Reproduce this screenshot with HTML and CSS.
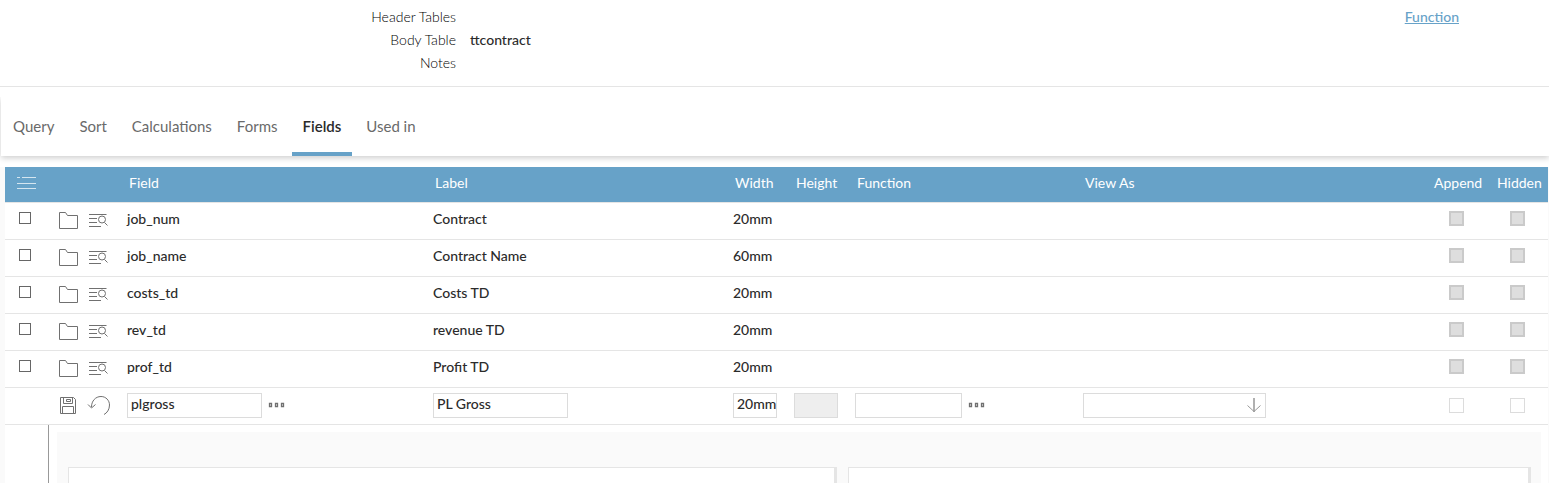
FILE: index.html
```html
<!DOCTYPE html>
<html lang="en">
<head>
<meta charset="utf-8">
<title>Fields</title>
<link rel="stylesheet" href="styles.css">
</head>
<body>
<svg class="defs" aria-hidden="true">
  <symbol id="folder" viewBox="0 0 20 20"><path d="M1.5 17.500V1.500H7.500L9.500 4.500H19.500V17.500Z"/></symbol>
  <symbol id="find" viewBox="0 0 20 20"><path d="M1 3.500H18.500M1 7.500H9M1 11.500H9M1 15.500H13M16.500 11.500L19.500 14.500"/><circle cx="14" cy="8.500" r="3.500"/></symbol>
  <symbol id="save" viewBox="0 0 20 20"><path d="M2.500 2.500H15.500L17.500 4.500V18.500H2.500ZM5.500 2.500V8.500H14.500V2.500M8.500 4.500H12.500V6.500H8.500ZM4.500 18.500V11.500H15.500V18.500"/></symbol>
  <symbol id="undo" viewBox="0 0 24 20"><path d="M4.500 12C4.500 6 8.500 1.500 14 1.500C19 1.500 22.500 5.500 22.500 10C22.500 14.500 20 18 17 19.500M1 9.500L4.500 13L8.500 9.500"/></symbol>
  <symbol id="dots" viewBox="0 0 18 6"><path d="M2.500 1.500H4.500V4.500H2.500ZM8.500 1.500H10.500V4.500H8.500ZM14.500 1.500H16.500V4.500H14.500Z" stroke-width="1.300"/></symbol>
</svg>
<header class="summary">
  <dl class="facts">
    <dt>Header Tables</dt><dd></dd>
    <dt>Body Table</dt><dd>ttcontract</dd>
    <dt>Notes</dt><dd></dd>
  </dl>
  <a class="function-link" href="#function">Function</a>
</header>
<nav class="tabs">
  <a class="tab" href="#query">Query</a>
  <a class="tab" href="#sort">Sort</a>
  <a class="tab" href="#calculations">Calculations</a>
  <a class="tab" href="#forms">Forms</a>
  <a class="tab active" href="#fields" aria-current="page">Fields</a>
  <a class="tab" href="#used">Used in</a>
</nav>
<main class="content">
  <table class="grid">
    <colgroup><col class="c-check"><col class="c-tools"><col class="c-field"><col class="c-label"><col class="c-small"><col class="c-small"><col class="c-function"><col><col class="c-append"><col class="c-hidden"></colgroup>
    <thead>
      <tr>
        <th><button class="icon-button menu" aria-label="Menu"><svg width="20" height="14"><path d="M1 1.500H4M6 1.500H20M1 7.500H20M1 12.500H20"/></svg></button></th>
        <th></th><th>Field</th><th>Label</th><th>Width</th><th>Height</th><th>Function</th><th>View As</th><th>Append</th><th>Hidden</th>
      </tr>
    </thead>
    <tbody>
      <tr>
        <td><input type="checkbox" class="pick" aria-label="Select job_num"></td>
        <td><div class="tools"><button class="icon-button" aria-label="Open"><svg width="20" height="20"><use href="#folder"/></svg></button><button class="icon-button" aria-label="Details"><svg width="20" height="20"><use href="#find"/></svg></button></div></td>
        <td>job_num</td><td>Contract</td><td>20mm</td><td></td><td></td><td></td>
        <td class="flag"><input type="checkbox" class="box" disabled aria-label="Append"></td><td class="flag last"><input type="checkbox" class="box" disabled aria-label="Hidden"></td>
      </tr>
      <tr>
        <td><input type="checkbox" class="pick" aria-label="Select job_name"></td>
        <td><div class="tools"><button class="icon-button" aria-label="Open"><svg width="20" height="20"><use href="#folder"/></svg></button><button class="icon-button" aria-label="Details"><svg width="20" height="20"><use href="#find"/></svg></button></div></td>
        <td>job_name</td><td>Contract Name</td><td>60mm</td><td></td><td></td><td></td>
        <td class="flag"><input type="checkbox" class="box" disabled aria-label="Append"></td><td class="flag last"><input type="checkbox" class="box" disabled aria-label="Hidden"></td>
      </tr>
      <tr>
        <td><input type="checkbox" class="pick" aria-label="Select costs_td"></td>
        <td><div class="tools"><button class="icon-button" aria-label="Open"><svg width="20" height="20"><use href="#folder"/></svg></button><button class="icon-button" aria-label="Details"><svg width="20" height="20"><use href="#find"/></svg></button></div></td>
        <td>costs_td</td><td>Costs TD</td><td>20mm</td><td></td><td></td><td></td>
        <td class="flag"><input type="checkbox" class="box" disabled aria-label="Append"></td><td class="flag last"><input type="checkbox" class="box" disabled aria-label="Hidden"></td>
      </tr>
      <tr>
        <td><input type="checkbox" class="pick" aria-label="Select rev_td"></td>
        <td><div class="tools"><button class="icon-button" aria-label="Open"><svg width="20" height="20"><use href="#folder"/></svg></button><button class="icon-button" aria-label="Details"><svg width="20" height="20"><use href="#find"/></svg></button></div></td>
        <td>rev_td</td><td>revenue TD</td><td>20mm</td><td></td><td></td><td></td>
        <td class="flag"><input type="checkbox" class="box" disabled aria-label="Append"></td><td class="flag last"><input type="checkbox" class="box" disabled aria-label="Hidden"></td>
      </tr>
      <tr>
        <td><input type="checkbox" class="pick" aria-label="Select prof_td"></td>
        <td><div class="tools"><button class="icon-button" aria-label="Open"><svg width="20" height="20"><use href="#folder"/></svg></button><button class="icon-button" aria-label="Details"><svg width="20" height="20"><use href="#find"/></svg></button></div></td>
        <td>prof_td</td><td>Profit TD</td><td>20mm</td><td></td><td></td><td></td>
        <td class="flag"><input type="checkbox" class="box" disabled aria-label="Append"></td><td class="flag last"><input type="checkbox" class="box" disabled aria-label="Hidden"></td>
      </tr>
      <tr class="editing">
        <td></td>
        <td><div class="tools"><button class="icon-button" aria-label="Save"><svg width="20" height="20"><use href="#save"/></svg></button><button class="icon-button" aria-label="Undo"><svg width="24" height="20"><use href="#undo"/></svg></button></div></td>
        <td><div class="lookup"><input class="text wide" type="text" value="plgross" aria-label="Field"><button class="icon-button" aria-label="Choose field"><svg width="18" height="6"><use href="#dots"/></svg></button></div></td>
        <td><div class="lookup"><input class="text wide" type="text" value="PL Gross" aria-label="Label"></div></td>
        <td><div class="lookup"><input class="text small" type="text" value="20mm" aria-label="Width"></div></td>
        <td><div class="lookup"><input class="text small" type="text" disabled aria-label="Height"></div></td>
        <td><div class="lookup"><input class="text medium" type="text" aria-label="Function"><button class="icon-button" aria-label="Choose function"><svg width="18" height="6"><use href="#dots"/></svg></button></div></td>
        <td><div class="select-wrap"><select class="text" aria-label="View As"><option></option></select><svg class="arrow" width="14" height="14"><path class="stem" d="M7 0V14"/><path d="M.5 7.500L7 13.500L13.500 7.500"/></svg></div></td>
        <td class="flag"><input type="checkbox" class="box" aria-label="Append"></td><td class="flag last"><input type="checkbox" class="box" aria-label="Hidden"></td>
      </tr>
    </tbody>
  </table>
  <section class="detail">
    <div class="panel">
      <div class="card major"></div>
      <div class="card minor"></div>
    </div>
  </section>
</main>
</body>
</html>
```
FILE: styles.css
```css
* { box-sizing: border-box; }
body {
  margin: 0;
  min-height: 100vh;
  display: flex;
  flex-direction: column;
  background: #fff;
  color: #2b2b2b;
  font: 14px/23px Lato, "Liberation Sans", sans-serif;
}
.defs { display: none; }
svg { display: block; fill: none; stroke: #707070; stroke-width: 1; }

.summary {
  display: flex;
  justify-content: space-between;
  padding: 5px 90px 12px 0;
  border-bottom: 1px solid #e5e5e5;
}
.facts {
  display: grid;
  grid-template-columns: 456px auto;
  grid-auto-rows: 23px;
  column-gap: 14px;
  margin: 0;
}
.facts dt { text-align: right; font-weight: 300; color: #000; }
.facts dd { margin: 0; font-weight: 500; }
.function-link { color: #67a2c8; font-weight: 500; }

.tabs {
  position: relative;
  display: flex;
  gap: 3px;
  margin: 10px 0 11px 1px;
  padding-left: 1px;
  background: #fff;
  box-shadow: 0 2px 6px rgba(0, 0, 0, .2);
  clip-path: inset(0 0 -11px -1px);
}
.tab {
  height: 59px;
  padding: 0 11px;
  border-bottom: 4px solid transparent;
  color: #6a6a6a;
  font-size: 15px;
  line-height: 59px;
  text-decoration: none;
}
.tab.active { border-color: #67a2c8; color: #2b2b2b; font-weight: 600; }

.content {
  flex: 1;
  display: flex;
  flex-direction: column;
  padding: 0 1px 0 5px;
  background: #fafafa;
}
.grid {
  width: 100%;
  table-layout: fixed;
  border-spacing: 0;
  background: #fff;
}
.c-check { width: 44px; }
.c-tools { width: 78px; }
.c-field { width: 306px; }
.c-label { width: 300px; }
.c-small { width: 61px; }
.c-function { width: 228px; }
.c-append { width: 63px; }
.c-hidden { width: 53px; }
th {
  height: 36px;
  padding: 0 0 4px 2px;
  border-bottom: 1px solid #e5e5e5;
  background: #67a2c8;
  background-clip: padding-box;
  color: #fff;
  font-weight: 400;
  text-align: left;
}
td {
  height: 37px;
  padding: 0 0 5px;
  border-bottom: 1px solid #e5e5e5;
  font-weight: 500;
}
.icon-button { display: block; padding: 0; border: 0; background: none; }
.menu { margin-left: 9px; }
.menu svg { stroke: #d5e6f0; }
.tools { display: flex; gap: 10px; padding: 4px 0 0 9px; }
input { display: block; margin: 0; }
input[type="checkbox"] { appearance: none; }
.pick { width: 12px; height: 12px; margin: 0 0 2px 14px; border: 1px solid #666; }
.box { width: 15px; height: 15px; margin: 0 auto; border: 1px solid #dcdcdc; background: #fff; }
.box:disabled { border: 2px solid #cacaca; background: #dedede; }
.flag { padding-right: 14px; }
.flag.last { padding-right: 8px; }
.editing td { padding-bottom: 2px; }
.editing .tools { gap: 9px; padding-top: 0; }
.lookup { display: flex; align-items: center; gap: 5px; }
.text {
  height: 25px;
  padding: 0 3px 3px;
  border: 1px solid #dcdcdc;
  border-radius: 0;
  background: #fff;
  color: #2b2b2b;
  font: 500 14px/20px Lato, "Liberation Sans", sans-serif;
}
.text:disabled { background: #eee; }
.wide { width: 135px; }
.medium { width: 107px; }
.small { width: 44px; padding-right: 0; }
.select-wrap { position: relative; width: 183px; }
.select-wrap select { display: block; width: 100%; appearance: none; }
.arrow { position: absolute; right: 5px; top: 5px; pointer-events: none; stroke: #999; }
.arrow .stem { stroke: #b0b0b0; stroke-width: 2; }

.detail {
  flex: 1;
  display: flex;
  margin-left: 43px;
  padding: 7px 7px 0 8px;
  border-left: 1px solid #999;
  background: #fff;
  box-shadow: -43px 0 #fff;
}
.panel {
  flex: 1;
  display: flex;
  gap: 11px;
  padding: 35px 10px 0 11px;
  background: #fafafa;
}
.card {
  min-height: 16px;
  border: 1px solid #e5e5e5;
  border-right-width: 3px;
  border-bottom: 0;
  background: #fff;
}
.major { flex: 769 1 0; }
.minor { flex: 683 1 0; }
```
